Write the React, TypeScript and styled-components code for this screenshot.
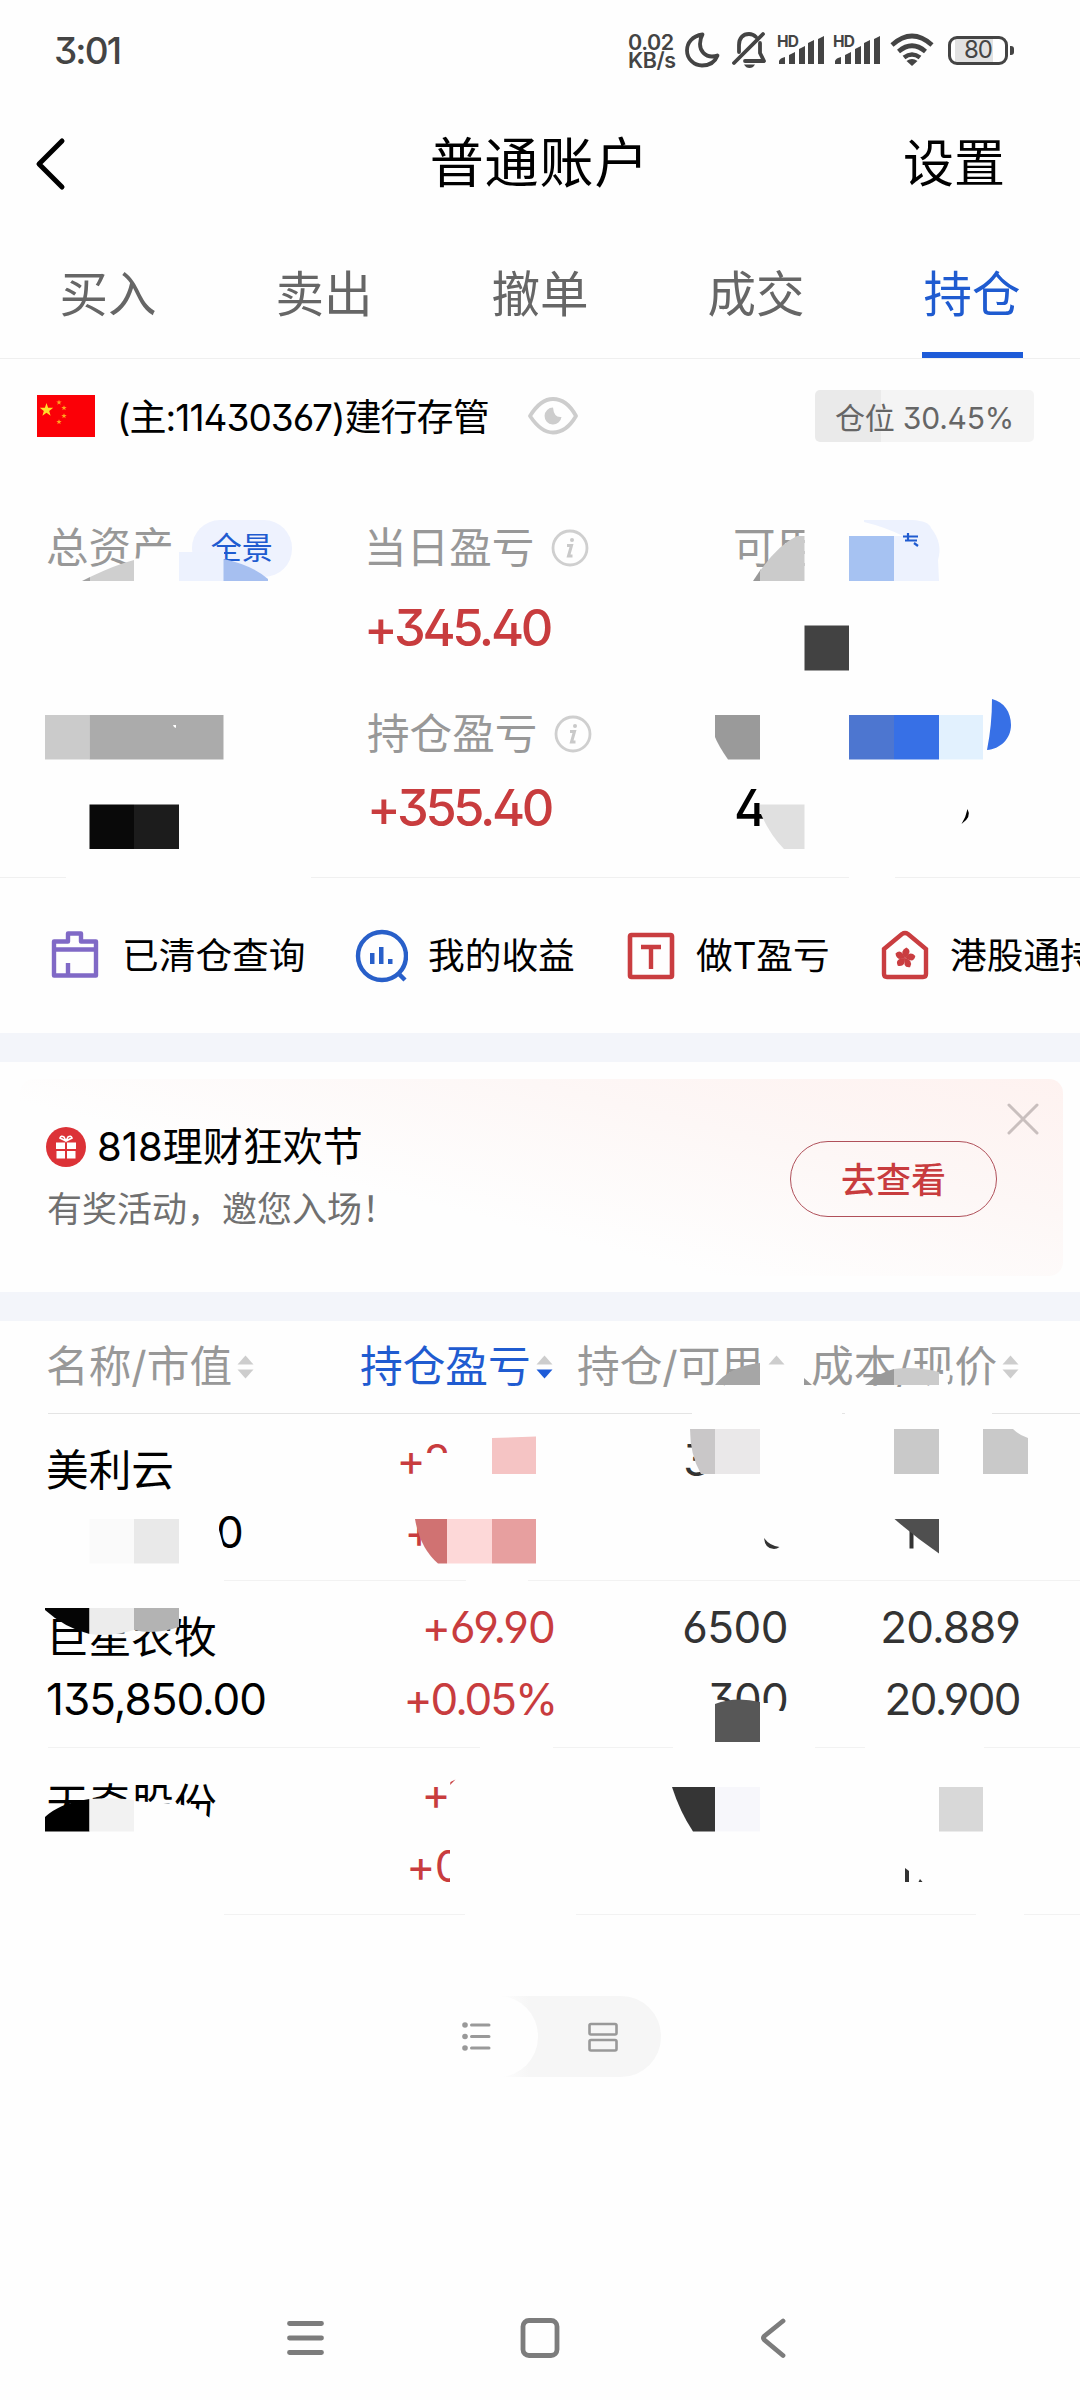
import React from "react";
import styled, { createGlobalStyle } from "styled-components";

const BG = "#fefefe";
const BLUE = "#1f5bd0";
const RED = "#c83c3e";
const GREY = "#989898";

const GlobalStyle = createGlobalStyle`
  * { box-sizing: border-box; }
  body { margin: 0; background: ${BG}; }
`;

const Page = styled.div`
  position: relative;
  width: 1080px;
  height: 2400px;
  overflow: hidden;
  display: flex;
  flex-direction: column;
  background: ${BG};
  color: #000;
  font-family: Inter, "Noto Sans CJK SC", sans-serif;
  font-feature-settings: "cv09", "ss01";
  white-space: nowrap;
`;

/* ---------- status bar ---------- */
const StatusBar = styled.header`
  flex: none;
  height: 100px;
  padding: 0 72px 0 54px;
  display: flex;
  align-items: center;
  justify-content: space-between;
  color: #444;
`;
const Clock = styled.span`
  font-size: 37px;
  font-weight: 500;
  letter-spacing: -1.9px;
`;
const StatusIcons = styled.div`
  display: flex;
  align-items: center;
`;
const NetSpeed = styled.div`
  width: 57px;
  display: flex;
  flex-direction: column;
  padding-top: 2px;
  font-size: 21.5px;
  font-weight: 600;
  line-height: 18px;
  letter-spacing: -0.4px;
`;
const StatusSvg = styled.svg`
  display: block;
`;
const Battery = styled.div`
  position: relative;
  width: 60px;
  height: 29px;
  border: 3px solid #444;
  border-radius: 9px;
  display: flex;
  align-items: center;
  justify-content: center;
  font-size: 24px;
  letter-spacing: -1px;
  line-height: 1;
  background: linear-gradient(90deg, #fff 4px, #e2e2e2 4px, #e2e2e2 42px, #fff 42px);
  &::after {
    content: "";
    position: absolute;
    right: -9px;
    top: 7px;
    width: 4px;
    height: 9px;
    border-radius: 0 3px 3px 0;
    background: #444;
  }
`;

/* ---------- title ---------- */
const TitleBar = styled.div`
  flex: none;
  height: 128px;
  padding: 0 75px 0 35px;
  display: grid;
  grid-template-columns: 1fr auto 1fr;
  align-items: center;
`;
const Title = styled.h1`
  margin: 0;
  padding-left: 39px;
  font-size: 54px;
  font-weight: 400;
  line-height: 80px;
  letter-spacing: 0.9px;
`;
const Settings = styled.span`
  justify-self: end;
  font-size: 51px;
  line-height: 80px;
`;

/* ---------- tabs ---------- */
const Tabs = styled.nav`
  flex: none;
  height: 131px;
  display: grid;
  grid-template-columns: repeat(5, 1fr);
  border-bottom: 1px solid #efefef;
`;
const Tab = styled.div<{ $active?: boolean }>`
  justify-self: center;
  width: 101px;
  display: flex;
  justify-content: center;
  padding-top: 32px;
  font-size: 48.5px;
  line-height: 70px;
  color: ${(p) => (p.$active ? BLUE : "#666")};
  border-bottom: 6px solid ${(p) => (p.$active ? "#1d5bd8" : "transparent")};
`;

/* ---------- account ---------- */
const AccountRow = styled.div`
  flex: none;
  height: 114px;
  padding: 0 46px 0 37px;
  display: flex;
  align-items: center;
`;
const AccountName = styled.span`
  flex: none;
  margin-left: 22px;
  width: 411px;
  margin-top: -2px;
  font-size: 37px;
  letter-spacing: -0.95px;
`;
const PositionTag = styled.span`
  margin-left: auto;
  width: 219px;
  height: 52px;
  border-radius: 5px;
  display: flex;
  align-items: center;
  justify-content: center;
  font-size: 30px;
  letter-spacing: -0.2px;
  color: #666;
  background: linear-gradient(90deg, #eaeaea 66px, #f4f4f4 66px);
`;

/* ---------- assets ---------- */
const Assets = styled.section`
  flex: none;
  height: 405px;
  padding: 45px 0 0 46px;
  display: grid;
  grid-template-columns: 318px 369px 1fr;
  grid-template-rows: 186px 1fr;
  border-bottom: 1px solid #f0f0f0;
`;
const AssetCell = styled.div<{ $shift?: number }>`
  display: flex;
  flex-direction: column;
  padding-left: ${(p) => p.$shift ?? 0}px;
`;
const AssetLabel = styled.div`
  height: 60px;
  display: flex;
  align-items: center;
  font-size: 42.6px;
  line-height: 60px;
  color: ${GREY};
`;
const AssetValue = styled.div<{ $lower?: boolean; $dark?: boolean }>`
  margin-top: ${(p) => (p.$lower ? 14 : 20)}px;
  height: 60px;
  font-size: 50.5px;
  font-weight: 500;
  line-height: 60px;
  letter-spacing: -3.3px;
  color: ${(p) => (p.$dark ? "#000" : RED)};
`;
const Panorama = styled.span`
  margin-left: 18px;
  width: 100px;
  height: 57px;
  border-radius: 28px;
  display: flex;
  align-items: center;
  justify-content: center;
  font-size: 31px;
  color: ${BLUE};
  background: #eef2fe;
`;
const InfoMark = styled.svg`
  margin-left: 17px;
`;

/* ---------- shortcuts ---------- */
const Shortcuts = styled.section`
  flex: none;
  height: 155px;
  padding-left: 48px;
  display: flex;
  align-items: center;
  overflow: hidden;
`;
const Shortcut = styled.div<{ $w: number }>`
  flex: none;
  width: ${(p) => p.$w}px;
  display: flex;
  align-items: center;
  gap: 20px;
  font-size: 36.7px;
  line-height: 54px;
`;
const Band = styled.div`
  flex: none;
  height: 29px;
  background: #f3f5fa;
`;

/* ---------- banner ---------- */
const BannerWrap = styled.section`
  flex: none;
  height: 230px;
  padding: 17px 17px 16px 20px;
`;
const Banner = styled.div`
  position: relative;
  height: 197px;
  padding: 0 66px 0 26px;
  border-radius: 14px;
  background: linear-gradient(194deg, #fef2f0 0%, #fdf7f6 30%, #fefefe 62%);
  display: flex;
  align-items: center;
  justify-content: space-between;
`;
const BannerText = styled.div`
  display: flex;
  flex-direction: column;
  padding-top: 1px;
`;
const BannerTitle = styled.div`
  display: flex;
  align-items: center;
  gap: 11px;
  font-size: 40px;
  line-height: 62px;
`;
const BannerSub = styled.div`
  padding-left: 1px;
  font-size: 35px;
  line-height: 62px;
  color: #707070;
`;
const BannerButton = styled.button`
  width: 207px;
  height: 76px;
  margin-top: 3px;
  padding: 0 0 3px;
  border: 1.5px solid #b0505a;
  border-radius: 38px;
  background: transparent;
  color: ${RED};
  font: 500 35px/1 "Noto Sans CJK SC", sans-serif;
`;
const BannerClose = styled.svg`
  position: absolute;
  right: 24px;
  top: 24px;
`;

/* ---------- table ---------- */
const TableHead = styled.div`
  flex: none;
  height: 93px;
  margin-left: 48px;
  display: grid;
  grid-template-columns: 314px 217px 234px 1fr;
  align-items: center;
  border-bottom: 1px solid #e4e4e4;
`;
const HeadCell = styled.div<{ $active?: boolean }>`
  display: flex;
  align-items: center;
  gap: 5px;
  font-size: 42.7px;
  line-height: 60px;
  margin-left: -2px;
  color: ${(p) => (p.$active ? BLUE : GREY)};
`;
const Row = styled.div`
  flex: none;
  height: 167px;
  margin-left: 48px;
  display: grid;
  grid-template-columns: 250px 258px 232px 233px;
  border-bottom: 1px solid #f2f2f2;
`;
const NameCell = styled.div`
  display: flex;
  flex-direction: column;
  font-size: 42.7px;
  padding-top: 27px;
  margin-left: -2px;
  & > b {
    font-weight: 400;
    height: 60px;
    line-height: 60px;
  }
  & > span {
    height: 60px;
    font-size: 44px;
    line-height: 62px;
    letter-spacing: -1px;
  }
`;
const NumCell = styled.div<{ $red?: boolean }>`
  display: flex;
  flex-direction: column;
  align-items: flex-end;
  padding-top: 10px;
  font-size: 44px;
  line-height: 72px;
  color: ${(p) => (p.$red ? RED : "#333")};
`;
const NumLine = styled.span<{ $right?: number; $track?: number }>`
  height: 72px;
  padding-right: ${(p) => p.$right ?? 0}px;
  letter-spacing: ${(p) => p.$track ?? -0.5}px;
`;
const TailDigit = styled.span`
  padding-left: 170px;
`;

/* ---------- footer ---------- */
const ToggleWrap = styled.div`
  flex: none;
  height: 81px;
  margin-top: 81px;
  display: flex;
  justify-content: center;
`;
const Toggle = styled.div`
  width: 242px;
  height: 81px;
  border-radius: 40px;
  display: flex;
  background: linear-gradient(90deg, ${BG} 80px, #f6f6f6 110px);
`;
const ToggleItem = styled.div<{ $on?: boolean }>`
  width: ${(p) => (p.$on ? 119 : 123)}px;
  height: 81px;
  border-radius: 40px;
  display: flex;
  align-items: center;
  justify-content: center;
  padding: ${(p) => (p.$on ? "0 4px 0 0" : "0 0 0 6px")};
  background: ${(p) => (p.$on ? BG : "transparent")};
`;
const SystemNav = styled.footer`
  margin-top: auto;
  height: 124px;
  padding: 0 292px 0 285px;
  display: grid;
  grid-template-columns: 233px 1fr auto;
  align-items: center;
`;

const Redactions = styled.svg`
  position: absolute;
  left: 0;
  top: 0;
  pointer-events: none;
`;

/* ---------- icons ---------- */
const Moon = () => (
  <StatusSvg width="47" height="40" viewBox="0 0 47 40">
    <path d="M17.500 4.500C7 6 2 13 2 20.500C2 29 9 35.500 17 35.500C24 35.500 30 32 32.500 25.500C31 26.200 29 26.500 27 26.500C20 26.500 15 21 15 14C15 10 16 7 17.500 4.500Z" fill="none" stroke="#444" strokeWidth="3.800" strokeLinejoin="round" />
  </StatusSvg>
);
const BellOff = () => (
  <StatusSvg width="45" height="40" viewBox="0 0 45 40">
    <g fill="none" stroke="#444" strokeWidth="3.800" strokeLinecap="round" strokeLinejoin="round">
      <path d="M7 22V15C7 8 11 4 17 4C20 4 22 5 24 7" />
      <path d="M28 13V23L32 31H13" />
      <path d="M2 33L31 4" />
    </g>
    <path d="M12 34.500H23Q21 38 17.500 38Q14 38 12 34.500Z" fill="#444" />
  </StatusSvg>
);
const HdText = styled.text`
  font: 700 15.500px Inter, sans-serif;
`;
const Signal = () => (
  <StatusSvg width="56" height="40" viewBox="0 0 56 40">
    <g fill="#444">
      <HdText x="0" y="16.500" textLength="22">HD</HdText>
      <path d="M2 34V31Q3 28 8 27V34ZM12 34V25L18 22V34ZM22 34V19L28 16V34ZM31 34V13L37 10V34ZM41 34V9L47 6V34Z" />
    </g>
  </StatusSvg>
);
const Wifi = () => (
  <StatusSvg width="59" height="40" viewBox="0 0 59 40">
    <g fill="none" stroke="#444" strokeWidth="4.600">
      <path d="M3 15Q23 -3 43 15" />
      <path d="M9.500 21.500Q23 10 36.500 21.500" />
      <path d="M15 27.500Q23 21.500 31 27.500" />
    </g>
    <path d="M17.500 31Q23 27 28.500 31L23 36Z" fill="#444" />
  </StatusSvg>
);
const starPoints = (cx: number, cy: number, r: number) =>
  Array.from({ length: 10 }, (_, i) => {
    const a = (Math.PI / 5) * i - Math.PI / 2;
    const d = i % 2 ? r * 0.4 : r;
    return `${(cx + d * Math.cos(a)).toFixed(1)},${(cy + d * Math.sin(a)).toFixed(1)}`;
  }).join(" ");
const Flag = () => (
  <svg width="58" height="42" viewBox="0 0 58 42">
    <rect width="58" height="42" fill="#fb0007" />
    <polygon points={starPoints(9.5, 15, 7)} fill="#ffdf2b" />
    {[[22, 7.5], [27, 13], [27, 21], [22, 27]].map(([x, y]) => (
      <polygon key={`${x}-${y}`} points={starPoints(x, y, 2.8)} fill="#ffa51f" />
    ))}
  </svg>
);
const Eye = () => (
  <svg width="50" height="38" viewBox="0 0 50 38">
    <path d="M2 19C10 6 17 2 25 2C33 2 41 6 48 19C41 31 33 35.500 25 35.500C17 35.500 10 31 2 19Z" fill="none" stroke="#cdcdcd" strokeWidth="3.800" strokeLinejoin="round" />
    <path d="M25 10.500A8.500 8.500 0 1 0 33.500 20Q26 21 25 10.500Z" fill="#cdcdcd" />
  </svg>
);
const Info = () => (
  <InfoMark width="38" height="38" viewBox="0 0 38 38">
    <circle cx="19" cy="19" r="17" fill="none" stroke="#cfcfcf" strokeWidth="2.800" />
    <path d="M16 16.500H20.500L17.500 27H21.500" fill="none" stroke="#c9c9c9" strokeWidth="3" />
    <circle cx="21" cy="11" r="2" fill="#c9c9c9" />
  </InfoMark>
);
const ClearedIcon = () => (
  <svg width="54" height="56" viewBox="0 0 54 56">
    <g fill="none" stroke="#8069c6" strokeWidth="4.400" strokeLinejoin="round">
      <path d="M6 13.500H20V5.500H33V13.500H48V47.500H6Z" />
      <path d="M6 21.500H48M20 35V47" />
    </g>
  </svg>
);
const IncomeIcon = () => (
  <svg width="54" height="56" viewBox="0 0 54 56">
    <circle cx="28" cy="28" r="24" fill="none" stroke="#285fc9" strokeWidth="4.400" />
    <path d="M44 45L51 52" stroke="#285fc9" strokeWidth="4.500" />
    <path d="M16 25H20.500V36H16ZM25 19H29.500V36H25ZM34 31H38.500V36H34Z" fill="#285fc9" />
  </svg>
);
const TIcon = () => (
  <svg width="50" height="56" viewBox="0 0 50 56">
    <rect x="4" y="7" width="42" height="42" rx="1.500" fill="none" stroke="#c93d40" strokeWidth="4.600" />
    <path d="M15 19H35M25 19V41" stroke="#c93d40" strokeWidth="4.400" />
  </svg>
);
const HkIcon = () => (
  <svg width="50" height="56" viewBox="0 0 50 56">
    <path d="M4 21L22 6Q25 4 28 6L46 21V46Q46 49 43 49H7Q4 49 4 46Z" fill="none" stroke="#c93d40" strokeWidth="4.400" />
    {[0, 72, 144, 216, 288].map((a) => (
      <path key={a} d="M25 30Q18 24 24.500 19.500Q32 22 25 30Z" fill="#c93d40" transform={`rotate(${a + 10} 25 30)`} />
    ))}
  </svg>
);
const Gift = () => (
  <svg width="40" height="40" viewBox="0 0 40 40">
    <circle cx="20" cy="20" r="20" fill="#dc3237" />
    <path d="M10 15.500H19V22H10ZM21 15.500H30V22H21ZM10.500 24H19V31.500H10.500ZM21 24H29.500V31.500H21Z" fill="#fff" />
    <path d="M20 14L14 11Q15 8 18 10L20 14L22 10Q25 8 26 11Z" fill="none" stroke="#fff" strokeWidth="1.600" />
  </svg>
);
const Sort = ({ down }: { down?: boolean }) => (
  <svg width="17" height="24" viewBox="0 0 17 24">
    <path d="M8.500 0.500L16.500 9.500H0.500Z" fill="#cdcdcd" />
    <path d="M8.500 23.500L16.500 14.500H0.500Z" fill={down ? "#1d5bd8" : "#cdcdcd"} />
  </svg>
);

const tabs = ["买入", "卖出", "撤单", "成交", "持仓"];

/* Mosaic blocks and wiped areas that hide the private figures. */
const blocks: [string, string][] = [
  // wiped areas
  [BG, "M134 558.500H178V590H134Z"],
  [BG, "M804.500 522H850V590H804.500Z"],
  [BG, "M760 1367.500H804V1392H760Z"],
  [BG, "M760 1340H766V1392H760Z"],
  [BG, "M939 1374L946 1374L948 1384V1392H939Z"],
  [BG, "M66 874H311V882H66ZM849 874H895V882H849Z"],
  [BG, "M692 1410H842V1416H692ZM845 1410H992V1416H845Z"],
  [BG, "M40 1577H224V1584H40ZM466 1577H528V1584H466Z"],
  [BG, "M480 1744H553V1751H480ZM673 1744H815V1751H673ZM865 1744H984V1751H865Z"],
  [BG, "M40 1911H224V1918H40ZM465 1911H576V1918H465ZM976 1911H1024V1918H976Z"],
  [BG, "M426 1453H460V1485H426Z"],
  [BG, "M205 1505H219V1530L225 1552V1558H205Z"],
  [BG, "M450 1840H480V1890H450Z"],
  // total assets
  ["#a2a2a2", "M82 581L90 577V581Z"],
  ["#cfcfcf", "M90 577Q115 565 134 560V581H90Z"],
  ["#edf2fe", "M179 552H224V581H179Z"],
  ["#a6bff0", "M223.500 559Q252 565 268 579V581H223.500Z"],
  // available
  ["#999999", "M753 581L761 569V581Z"],
  ["#cbcbcb", "M760 571Q778 545 797 536H804.500V581H760Z"],
  ["#edf2fe", "M864 520H912Q929 521 931 528Q943 543 938 560L939 581H894V536H903Q885 527 864 522Z"],
  ["#a6c2f2", "M849 536H894V581H849Z"],
  ["#424242", "M804.500 625.500H849V670.500H804.500Z"],
  // lower row
  ["#cbcbcb", "M45 715H89.500V759.500H45Z"],
  ["#ababab", "M89.500 715H223.500V759.500H89.500Z"],
  ["#ffffff", "M173 725H176V728L174 727Z"],
  ["#090909", "M89.500 804.500H134V849H89.500Z"],
  ["#1c1c1c", "M134 804.500H179V849H134Z"],
  ["#9a9a9a", "M715 715H760V759.500H728Q718 745 715 737Z"],
  ["#4d76d0", "M849 715H894V759.500H849Z"],
  ["#3770e6", "M894 715H939V759.500H894Z"],
  ["#e2f1fe", "M939 715H983V759.500H939Z"],
  ["#3770e6", "M992 699C1004 702 1011 712 1011 725C1011 739 1000 749 987 750Q992 725 992 699Z"],
  ["#e0e0e0", "M760 804.500H804.500V849H784Q770 835 760 812Z"],
  ["#000000", "M967.500 809Q972 817 961.500 824Q966 817 967.500 809Z"],
  // table head
  ["#a6a6a6", "M715 1385Q730 1366 760 1363V1385Z"],
  ["#999999", "M804 1378L812 1385H804Z"],
  ["#9a9a9a", "M865 1385Q880 1372 894 1369V1385Z"],
  ["#cbcbcb", "M894 1369Q915 1366 939 1372V1385H894Z"],
  // first holding
  ["#fafafa", "M89.500 1519H134V1563.500H89.500Z"],
  ["#e9e9e9", "M134 1519H179V1563.500H134Z"],
  ["#f5c4c4", "M492 1438L536 1436.500V1474H492Z"],
  ["#d07272", "M415 1519H447V1563.500H438Q420 1548 415 1519Z"],
  ["#fdd8d8", "M447 1519H492V1563.500H447Z"],
  ["#e79f9f", "M492 1519H536V1563.500H492Z"],
  ["#c9c7c8", "M690 1429H715V1474H701Q690 1455 690 1429Z"],
  ["#eae8e9", "M715 1429H760V1474H715Z"],
  ["#c9c9c9", "M894 1429H939V1474H894Z"],
  ["#c9c9c9", "M983 1429H1013Q1019 1435 1028 1438V1474H983Z"],
  ["#333333", "M764 1538Q770 1546 779.500 1547Q777 1549 774 1549Q765 1549 764 1538Z"],
  ["#333333", "M909.500 1530H913.500V1548.500H909.500Z"],
  ["#4f4f4f", "M894.500 1519H939V1553.500Q915 1537 894.500 1519Z"],
  // second holding
  ["#050505", "M45 1608H89.500V1634Q65 1628 45 1610Z"],
  ["#ececec", "M89.500 1608H134V1630Q112 1637 89.500 1634Z"],
  ["#b3b3b3", "M134 1608H179V1627Q155 1635 134 1630Z"],
  [BG, "M705 1704H715V1722H705ZM760 1703H769L780 1711H790V1722H760Z"],
  ["#575757", "M715 1704Q735 1696 760 1702V1742H715Z"],
  // third holding
  [BG, "M134 1801L178 1804L196 1808L210 1818H222V1835H134Z"],
  ["#000000", "M45 1817Q60 1803 89.500 1799V1831.500H45Z"],
  ["#f2f2f2", "M89.500 1799Q115 1797 134 1800V1831.500H89.500Z"],
  [RED, "M450 1785L450.500 1782L455.500 1779.500Z"],
  ["#353535", "M672 1787H715V1831.500H693Q680 1812 672 1787Z"],
  ["#f7f7fb", "M715 1787H760V1831.500H715Z"],
  ["#d8d8d8", "M939 1787H983V1831.500H939Z"],
  ["#333333", "M905 1868L909 1871V1882H905Z"],
  ["#333333", "M920 1879L922.500 1882H918.500Z"],
];

export default function App() {
  return (
    <>
      <GlobalStyle />
      <Page>
        <StatusBar>
          <Clock>3:01</Clock>
          <StatusIcons>
            <NetSpeed>
              <span>0.02</span>
              <span>KB/s</span>
            </NetSpeed>
            <Moon />
            <BellOff />
            <Signal />
            <Signal />
            <Wifi />
            <Battery>80</Battery>
          </StatusIcons>
        </StatusBar>

        <TitleBar>
          <svg width="32" height="54" viewBox="0 0 32 54">
            <path d="M27 4L4 27L27 50" fill="none" stroke="#000" strokeWidth="5" strokeLinecap="round" strokeLinejoin="round" />
          </svg>
          <Title>普通账户</Title>
          <Settings>设置</Settings>
        </TitleBar>

        <Tabs>
          {tabs.map((t) => (
            <Tab key={t} $active={t === "持仓"}>
              {t}
            </Tab>
          ))}
        </Tabs>

        <AccountRow>
          <Flag />
          <AccountName>(主:11430367)建行存管</AccountName>
          <Eye />
          <PositionTag>仓位 30.45%</PositionTag>
        </AccountRow>

        <Assets>
          <AssetCell>
            <AssetLabel>
              总资产<Panorama>全景</Panorama>
            </AssetLabel>
          </AssetCell>
          <AssetCell>
            <AssetLabel>
              当日盈亏
              <Info />
            </AssetLabel>
            <AssetValue>+345.40</AssetValue>
          </AssetCell>
          <AssetCell>
            <AssetLabel>可用</AssetLabel>
          </AssetCell>
          <AssetCell />
          <AssetCell $shift={3}>
            <AssetLabel>
              持仓盈亏
              <Info />
            </AssetLabel>
            <AssetValue $lower>+355.40</AssetValue>
          </AssetCell>
          <AssetCell $shift={1}>
            <AssetLabel />
            <AssetValue $lower $dark>4</AssetValue>
          </AssetCell>
        </Assets>

        <Shortcuts>
          <Shortcut $w={306}>
            <ClearedIcon />
            已清仓查询
          </Shortcut>
          <Shortcut $w={272}>
            <IncomeIcon />
            我的收益
          </Shortcut>
          <Shortcut $w={254}>
            <TIcon />
            做T盈亏
          </Shortcut>
          <Shortcut $w={400}>
            <HkIcon />
            港股通持
          </Shortcut>
        </Shortcuts>

        <Band />
        <BannerWrap>
          <Banner>
            <BannerText>
              <BannerTitle>
                <Gift />
                818理财狂欢节
              </BannerTitle>
              <BannerSub>有奖活动，邀您入场！</BannerSub>
            </BannerText>
            <BannerButton>去查看</BannerButton>
            <BannerClose width="32" height="32" viewBox="0 0 32 32">
              <path d="M2 2L30 30M30 2L2 30" stroke="#c9bfbe" strokeWidth="3" strokeLinecap="round" />
            </BannerClose>
          </Banner>
        </BannerWrap>
        <Band />

        <TableHead>
          <HeadCell>
            名称/市值
            <Sort />
          </HeadCell>
          <HeadCell $active>
            持仓盈亏
            <Sort down />
          </HeadCell>
          <HeadCell>
            持仓/可用
            <Sort />
          </HeadCell>
          <HeadCell>
            成本/现价
            <Sort />
          </HeadCell>
        </TableHead>
        <Row>
          <NameCell>
            <b>美利云</b>
            <TailDigit>0</TailDigit>
          </NameCell>
          <NumCell $red>
            <NumLine $right={106}>+2</NumLine>
            <NumLine $right={123}>+</NumLine>
          </NumCell>
          <NumCell>
            <NumLine $right={78}>3</NumLine>
          </NumCell>
          <NumCell />
        </Row>
        <Row>
          <NameCell>
            <b>巨星农牧</b>
            <span>135,850.00</span>
          </NameCell>
          <NumCell $red>
            <NumLine $right={1} $track={-0.8}>+69.90</NumLine>
            <NumLine $track={-2.1}>+0.05%</NumLine>
          </NumCell>
          <NumCell>
            <NumLine>6500</NumLine>
            <NumLine $track={-0.8}>300</NumLine>
          </NumCell>
          <NumCell>
            <NumLine $right={1} $track={-0.9}>20.889</NumLine>
            <NumLine $right={1} $track={-1.6}>20.900</NumLine>
          </NumCell>
        </Row>
        <Row>
          <NameCell>
            <b>天奇股份</b>
          </NameCell>
          <NumCell $red>
            <NumLine $right={106}>+</NumLine>
            <NumLine $right={94}>+0</NumLine>
          </NumCell>
          <NumCell />
          <NumCell />
        </Row>

        <ToggleWrap>
          <Toggle>
            <ToggleItem $on>
              <svg width="30" height="32" viewBox="0 0 30 32">
                <path d="M9.500 4H27M9.500 15.500H27M9.500 27H27" stroke="#999" strokeWidth="3" strokeLinecap="round" />
                <g fill="#999">
                  <circle cx="3" cy="4" r="2.800" />
                  <circle cx="3" cy="15.500" r="2.800" />
                  <circle cx="3" cy="27" r="2.800" />
                </g>
              </svg>
            </ToggleItem>
            <ToggleItem>
              <svg width="30" height="30" viewBox="0 0 30 30">
                <g fill="none" stroke="#999" strokeWidth="2.600">
                  <rect x="1.500" y="2" width="27" height="10.500" rx="1.500" />
                  <rect x="1.500" y="18" width="27" height="10.500" rx="1.500" />
                </g>
              </svg>
            </ToggleItem>
          </Toggle>
        </ToggleWrap>

        <SystemNav>
          <svg width="40" height="40" viewBox="0 0 40 40">
            <path d="M4.500 5.500H36.500M4.500 20H36.500M4.500 34.500H36.500" stroke="#7c7c7c" strokeWidth="4.800" strokeLinecap="round" />
          </svg>
          <svg width="44" height="42" viewBox="0 0 44 42">
            <rect x="5" y="3.500" width="34" height="35" rx="6" fill="none" stroke="#7c7c7c" strokeWidth="4.800" />
          </svg>
          <svg width="28" height="42" viewBox="0 0 28 42">
            <path d="M23 4L4.500 19Q2.500 21 4.500 23L23 38.500" fill="none" stroke="#7c7c7c" strokeWidth="4.800" strokeLinecap="round" />
          </svg>
        </SystemNav>

        <Redactions width="1080" height="2400" viewBox="0 0 1080 2400">
          {blocks.map(([fill, d], i) => (
            <path key={i} d={d} fill={fill} />
          ))}
          <path d="M903 536.500H918M908 533V541M905 540.500H917M914 543L918 546" fill="none" stroke={BLUE} strokeWidth="2.200" />
        </Redactions>
      </Page>
    </>
  );
}
